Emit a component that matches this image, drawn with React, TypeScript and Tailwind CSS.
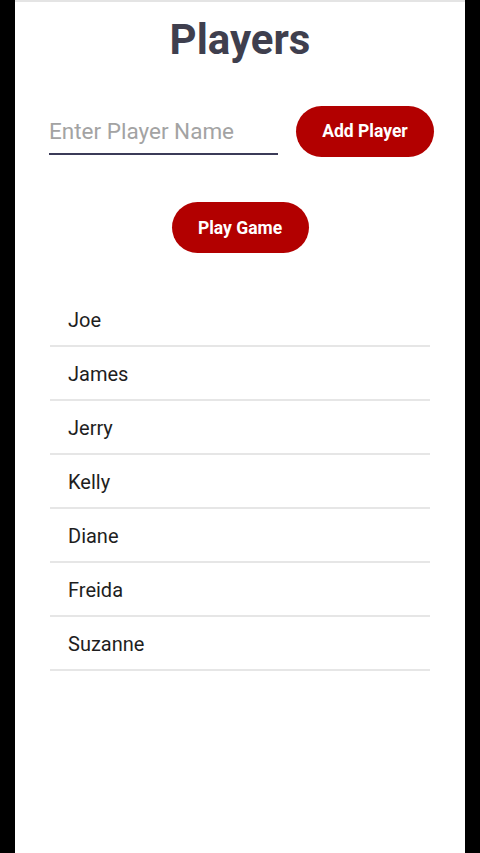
import { useState } from "react";

const PLAYERS = ["Joe", "James", "Jerry", "Kelly", "Diane", "Freida", "Suzanne"];

export default function App() {
  const [name, setName] = useState("");

  return (
    <div className="flex h-[853px] w-full bg-black font-['Roboto',sans-serif]">
      <div className="ml-[15px] flex h-full w-[450px] flex-col border-t-2 border-[#e4e4e4] bg-white">
        {/* title */}
        <h1 className="pt-[13px] text-center text-[42px] font-bold leading-[50px] text-[#3f3f4e]">
          Players
        </h1>

        {/* add player row */}
        <div className="mt-[41px] flex items-start pl-[34px]">
          <div className="mt-[10px] w-[229px] border-b-2 border-[#3b3b58] pb-[7px]">
            <input
              value={name}
              onChange={(e) => setName(e.target.value)}
              placeholder="Enter Player Name"
              className="block h-[30px] w-full bg-transparent text-[22.5px] leading-[30px] text-[#222] placeholder:text-[#a3a3a3] focus:outline-none"
            />
          </div>
          <button className="ml-[18px] h-[51px] w-[138px] rounded-full bg-[#b20000] text-[17.5px] font-bold text-white">
            Add Player
          </button>
        </div>

        {/* play */}
        <button className="mx-auto mt-[45px] h-[51px] w-[137px] rounded-full bg-[#b20000] pt-[2px] text-[17.5px] font-bold text-white">
          Play Game
        </button>

        {/* list */}
        <ul className="ml-[35px] mt-[40px] w-[380px]">
          {PLAYERS.map((p) => (
            <li
              key={p}
              className="flex h-[54px] items-center border-b-2 border-[#e6e6e6] pl-[18px] pt-[2px] text-[20px] text-[#1e1e1e]"
            >
              {p}
            </li>
          ))}
        </ul>
      </div>
    </div>
  );
}
